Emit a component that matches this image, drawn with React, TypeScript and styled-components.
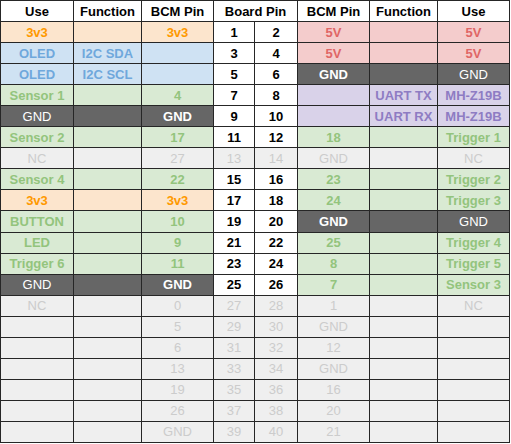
import React from "react";
import styled, { createGlobalStyle } from "styled-components";

type Tone = "head" | "orange" | "blue" | "green" | "red" | "purple" | "gnd" | "nc" | "pin";

type CellData = { text: string; tone: Tone; light?: boolean; span?: number };

const palette: Record<Tone, { bg: string; fg: string }> = {
  head: { bg: "#ffffff", fg: "#000000" },
  orange: { bg: "#fce5cd", fg: "#ff9900" },
  blue: { bg: "#cfe2f3", fg: "#6fa8dc" },
  green: { bg: "#d9ead3", fg: "#93c47d" },
  red: { bg: "#f4cccc", fg: "#e06666" },
  purple: { bg: "#d9d2e9", fg: "#8e7cc3" },
  gnd: { bg: "#666666", fg: "#ffffff" },
  nc: { bg: "#efefef", fg: "#cccccc" },
  pin: { bg: "#ffffff", fg: "#000000" },
};

const mk = (tone: Tone) => (text = "", light = false): CellData => ({ text, tone, light });
const o = mk("orange");
const b = mk("blue");
const g = mk("green");
const r = mk("red");
const p = mk("purple");
const k = mk("gnd");
const n = (text = "") => ({ text, tone: "nc" as Tone, light: true });
const pin = mk("pin");

const header: CellData[] = [
  { text: "Use", tone: "head" },
  { text: "Function", tone: "head" },
  { text: "BCM Pin", tone: "head" },
  { text: "Board Pin", tone: "head", span: 2 },
  { text: "BCM Pin", tone: "head" },
  { text: "Function", tone: "head" },
  { text: "Use", tone: "head" },
];

const rows: CellData[][] = [
  [o("3v3"), o(), o("3v3"), pin("1"), pin("2"), r("5V"), r(), r("5V")],
  [b("OLED"), b("I2C SDA"), b(), pin("3"), pin("4"), r("5V"), r(), r("5V")],
  [b("OLED"), b("I2C SCL"), b(), pin("5"), pin("6"), k("GND"), k(), k("GND", true)],
  [g("Sensor 1"), g(), g("4"), pin("7"), pin("8"), p(), p("UART TX"), p("MH-Z19B")],
  [k("GND", true), k(), k("GND"), pin("9"), pin("10"), p(), p("UART RX"), p("MH-Z19B")],
  [g("Sensor 2"), g(), g("17"), pin("11"), pin("12"), g("18"), g(), g("Trigger 1")],
  [n("NC"), n(), n("27"), n("13"), n("14"), n("GND"), n(), n("NC")],
  [g("Sensor 4"), g(), g("22"), pin("15"), pin("16"), g("23"), g(), g("Trigger 2")],
  [o("3v3"), o(), o("3v3"), pin("17"), pin("18"), g("24"), g(), g("Trigger 3")],
  [g("BUTTON"), g(), g("10"), pin("19"), pin("20"), k("GND"), k(), k("GND", true)],
  [g("LED"), g(), g("9"), pin("21"), pin("22"), g("25"), g(), g("Trigger 4")],
  [g("Trigger 6"), g(), g("11"), pin("23"), pin("24"), g("8"), g(), g("Trigger 5")],
  [k("GND", true), k(), k("GND"), pin("25"), pin("26"), g("7"), g(), g("Sensor 3")],
  [n("NC"), n(), n("0"), n("27"), n("28"), n("1"), n(), n("NC")],
  [n(), n(), n("5"), n("29"), n("30"), n("GND"), n(), n()],
  [n(), n(), n("6"), n("31"), n("32"), n("12"), n(), n()],
  [n(), n(), n("13"), n("33"), n("34"), n("GND"), n(), n()],
  [n(), n(), n("19"), n("35"), n("36"), n("16"), n(), n()],
  [n(), n(), n("26"), n("37"), n("38"), n("20"), n(), n()],
  [n(), n(), n("GND"), n("39"), n("40"), n("21"), n(), n()],
];

const App: React.FC = () => {
  return (
    <>
      <GlobalStyle />
      <PinTable>
        {header.map((cell, i) => (
          <Cell key={`h${i}`} $tone={cell.tone} $span={cell.span ?? 1}>
            {cell.text}
          </Cell>
        ))}
        {rows.map((row, ri) =>
          row.map((cell, ci) => (
            <Cell key={`${ri}-${ci}`} $tone={cell.tone} $light={cell.light} $span={1}>
              {cell.text}
            </Cell>
          ))
        )}
      </PinTable>
    </>
  );
};

export default App;

const GlobalStyle = createGlobalStyle`
  html, body {
    margin: 0;
    padding: 0;
    background: #ffffff;
  }
`;

const PinTable = styled.div`
  display: grid;
  grid-template-columns: 72px 67px 71px 40px 42px 71px 67px 71px;
  grid-template-rows: repeat(21, 1fr);
  gap: 1px;
  padding: 1px;
  width: fit-content;
  height: 443px;
  box-sizing: border-box;
  background: #262626;
  font-family: "Liberation Sans", Arial, sans-serif;
  font-size: 13px;
`;

const Cell = styled.div<{ $tone: Tone; $light?: boolean; $span: number }>`
  grid-column: span ${(props) => props.$span};
  display: flex;
  align-items: center;
  justify-content: center;
  white-space: nowrap;
  overflow: hidden;
  background: ${(props) => palette[props.$tone].bg};
  color: ${(props) => palette[props.$tone].fg};
  font-weight: ${(props) => (props.$light ? 400 : 700)};
`;
